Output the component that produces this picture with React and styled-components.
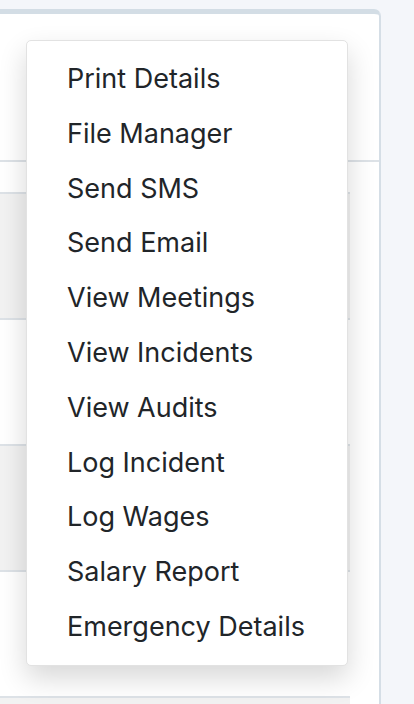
import React from "react";
import styled, { createGlobalStyle } from "styled-components";

const GlobalStyle = createGlobalStyle`
  html, body {
    margin: 0;
    padding: 0;
    background: #f4f6fa;
    overflow: hidden;
  }
  body {
    font-family: Inter, "Noto Sans", "Liberation Sans", sans-serif;
    color: #212529;
  }
`;

const Page = styled.div`
  position: relative;
  width: 414px;
  height: 704px;
  padding-top: 9px;
  box-sizing: border-box;
  overflow: hidden;
`;

const Card = styled.div`
  width: 381px;
  height: 720px;
  box-sizing: border-box;
  background: #fff;
  border-top: 5px solid #d3dde5;
  border-right: 2px solid #d5dee6;
  border-top-right-radius: 7px;
  display: flex;
  flex-direction: column;
`;

const CardHeader = styled.div`
  height: 146px;
  flex-shrink: 0;
  border-bottom: 2px solid #dde2e7;
`;

const Table = styled.div`
  width: 350px;
  display: flex;
  flex-direction: column;
`;

const HeadRow = styled.div`
  height: 30px;
  border-bottom: 2px solid #dde2e7;
`;

const Row = styled.div`
  height: 124px;
  background: ${(p) => (p.$striped ? "#f2f2f2" : "#fff")};
  border-bottom: 2px solid #dde2e7;
`;

const Menu = styled.ul`
  position: absolute;
  left: 26px;
  top: 40px;
  width: 322px;
  margin: 0;
  padding: 11px 0 10px;
  list-style: none;
  box-sizing: border-box;
  background: #fff;
  border: 1px solid #e2e2e2;
  border-radius: 5px;
  box-shadow: 0 12px 28px rgba(0, 0, 0, 0.16);
`;

const MenuItem = styled.li`
  height: 54.8px;
  line-height: 54.8px;
  padding: 0 40px;
  font-size: 27px;
  font-weight: 400;
  color: #212529;
  white-space: nowrap;
  cursor: pointer;
`;

const items = [
  "Print Details",
  "File Manager",
  "Send SMS",
  "Send Email",
  "View Meetings",
  "View Incidents",
  "View Audits",
  "Log Incident",
  "Log Wages",
  "Salary Report",
  "Emergency Details",
];

export default function App() {
  return (
    <>
      <GlobalStyle />
      <Page>
        <Card>
          <CardHeader />
          <Table>
            <HeadRow />
            <Row $striped />
            <Row />
            <Row $striped />
            <Row />
            <Row $striped />
          </Table>
        </Card>
        <Menu>
          {items.map((label) => (
            <MenuItem key={label}>{label}</MenuItem>
          ))}
        </Menu>
      </Page>
    </>
  );
}
